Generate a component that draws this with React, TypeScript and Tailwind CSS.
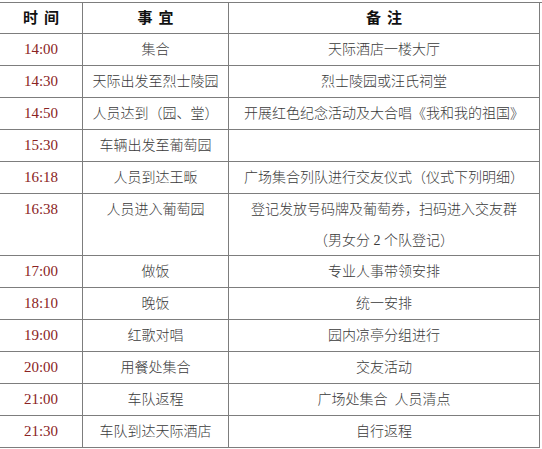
import React from "react";

interface Row {
  time: string;
  item: string;
  note: string[];
}

const rows: Row[] = [
  { time: "14:00", item: "集合", note: ["天际酒店一楼大厅"] },
  { time: "14:30", item: "天际出发至烈士陵园", note: ["烈士陵园或汪氏祠堂"] },
  { time: "14:50", item: "人员达到（园、堂）", note: ["开展红色纪念活动及大合唱《我和我的祖国》"] },
  { time: "15:30", item: "车辆出发至葡萄园", note: [] },
  { time: "16:18", item: "人员到达王畈", note: ["广场集合列队进行交友仪式（仪式下列明细）"] },
  {
    time: "16:38",
    item: "人员进入葡萄园",
    note: ["登记发放号码牌及葡萄券，扫码进入交友群", "（男女分 2 个队登记）"],
  },
  { time: "17:00", item: "做饭", note: ["专业人事带领安排"] },
  { time: "18:10", item: "晚饭", note: ["统一安排"] },
  { time: "19:00", item: "红歌对唱", note: ["园内凉亭分组进行"] },
  { time: "20:00", item: "用餐处集合", note: ["交友活动"] },
  { time: "21:00", item: "车队返程", note: ["广场处集合  人员清点"] },
  { time: "21:30", item: "车队到达天际酒店", note: ["自行返程"] },
];

const font = { fontFamily: '"Liberation Serif", "Noto Sans CJK SC", serif' };

function Head({ a, b }: { a: string; b: string }) {
  return (
    <div className="h-[31px] border-b border-r border-[#7d7d7d] flex items-center justify-center text-[15px] font-bold text-[#111]">
      {a}
      <span className="ml-[6px]">{b}</span>
    </div>
  );
}

export default function App() {
  return (
    <div className="w-[542px] h-[449px] bg-white pt-[2px] overflow-hidden" style={font}>
      <div className="grid grid-cols-[83px_146px_311px] border-t border-[#7d7d7d]">
        {/* header */}
        <Head a="时" b="间" />
        <Head a="事" b="宜" />
        <Head a="备" b="注" />

        {rows.map((r) => {
          const tall = r.note.length > 1;
          const h = tall ? "h-[62px]" : "h-[32px]";
          return (
            <React.Fragment key={r.time}>
              <div className={`${h} border-b border-r border-[#7d7d7d] text-center text-[15px] leading-[31px] text-[#8a2323]`}>
                {r.time}
              </div>
              <div className={`${h} border-b border-r border-[#7d7d7d] text-center text-[14px] font-light leading-[31px] text-[#3a3a3a]`}>
                {r.item}
              </div>
              <div className={`${h} border-b border-r border-[#7d7d7d] text-center text-[14px] font-light leading-[31px] text-[#3a3a3a] whitespace-pre`}>
                {r.note.map((n) => (
                  <div key={n}>{n}</div>
                ))}
              </div>
            </React.Fragment>
          );
        })}
      </div>
    </div>
  );
}
